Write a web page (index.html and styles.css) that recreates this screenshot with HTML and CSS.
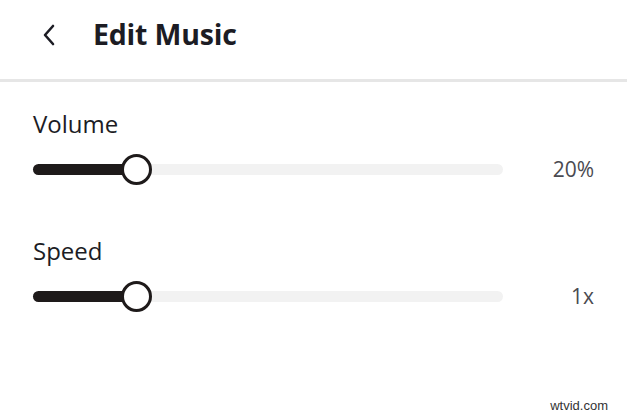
FILE: index.html
```html
<!DOCTYPE html>
<html lang="en">
<head>
    <meta charset="UTF-8">
    <title>Edit Music</title>
    <link rel="stylesheet" href="styles.css">
</head>
<body>
    <div class="header">
        <span class="back">
            <svg width="16" height="24" viewBox="0 0 16 24"><path d="M12 3 L4 12 L12 21" fill="none" stroke="#1c1c24" stroke-width="2.6" stroke-linecap="round" stroke-linejoin="round"/></svg>
        </span>
        <h1>Edit Music</h1>
    </div>

    <div class="content">
        <div class="setting">
            <div class="label">Volume</div>
            <div class="row">
                <div class="track">
                    <div class="fill" style="width: 22%"></div>
                    <div class="thumb" style="left: 22%"></div>
                </div>
                <div class="value">20%</div>
            </div>
        </div>
        <div class="setting">
            <div class="label">Speed</div>
            <div class="row">
                <div class="track">
                    <div class="fill" style="width: 22%"></div>
                    <div class="thumb" style="left: 22%"></div>
                </div>
                <div class="value">1x</div>
            </div>
        </div>
    </div>

    <div class="watermark">wtvid.com</div>
</body>
</html>
```

FILE: styles.css
```css
body {
    margin: 0;
    font-family: "Open Sans", Lato, sans-serif;
    background-color: #fff;
    color: #1c1c24;
    width: 627px;
    height: 416px;
    position: relative;
    overflow: hidden;
}
.header {
    display: flex;
    align-items: center;
    height: 79px;
    padding-left: 41px;
    border-bottom: 3px solid #e6e6e6;
}
.back {
    display: flex;
    width: 16px;
    margin-right: 36px;
    margin-top: -10px;
}
.header h1 {
    margin: 0;
    margin-top: -12px;
    font-size: 28.5px;
    font-weight: 700;
    letter-spacing: -0.2px;
}
.content {
    padding: 27px 33px 0 33px;
}
.setting {
    margin-bottom: 51px;
}
.label {
    font-size: 24px;
    line-height: 30px;
}
.row {
    display: flex;
    align-items: center;
    margin-top: 14px;
    height: 32px;
}
.track {
    position: relative;
    width: 470px;
    height: 11px;
    background-color: #f2f2f2;
    border-radius: 6px;
}
.fill {
    height: 100%;
    background-color: #1e1a1a;
    border-radius: 6px;
}
.thumb {
    position: absolute;
    top: 50%;
    width: 25px;
    height: 25px;
    margin-left: -15px;
    margin-top: -15.5px;
    border: 3px solid #1e1a1a;
    border-radius: 50%;
    background-color: #fff;
}
.value {
    flex: 1;
    text-align: right;
    font-size: 21px;
    color: #4a4a50;
}
.watermark {
    position: absolute;
    right: 19px;
    bottom: 3px;
    font-family: "Liberation Sans", sans-serif;
    font-size: 13px;
    color: #333;
}
```
